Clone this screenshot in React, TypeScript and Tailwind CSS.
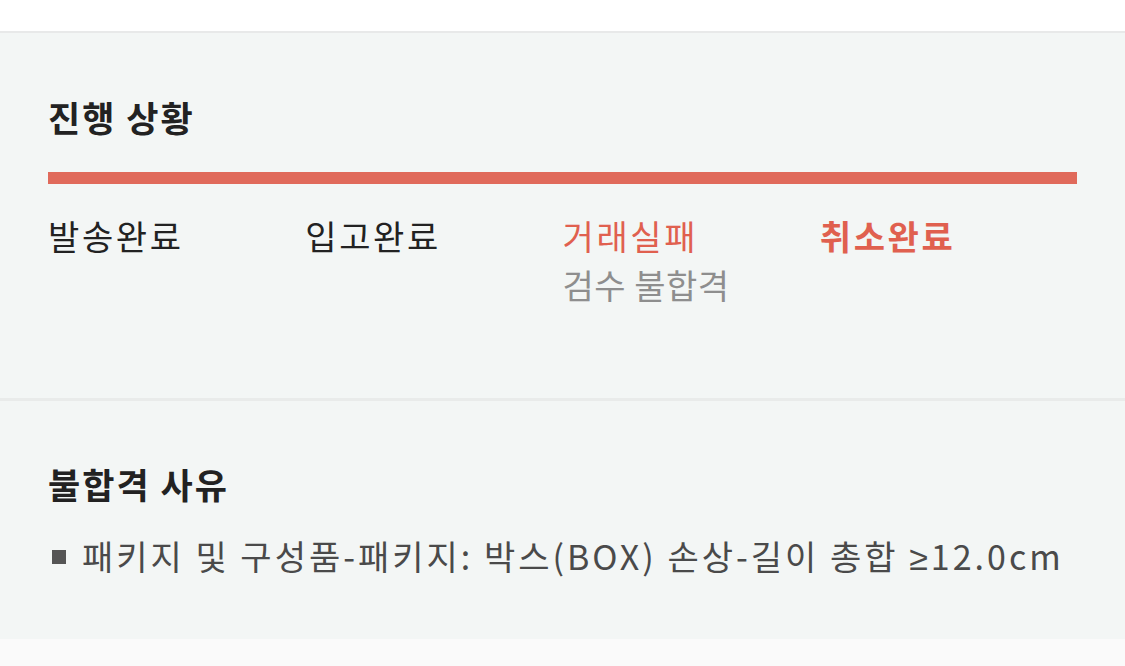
const steps = [
  { label: "발송완료", tone: "done" },
  { label: "입고완료", tone: "done" },
  { label: "거래실패", tone: "fail", sub: "검수 불합격" },
  { label: "취소완료", tone: "current" },
];

export default function App() {
  return (
    <div
      className="min-h-screen bg-[#fafafa] text-[#222]"
      style={{ fontFamily: '"Noto Sans CJK KR", "Noto Sans", sans-serif' }}
    >
      <div className="h-[31px] bg-white" />
      <div className="border-t-2 border-[#e8e9e9] bg-[#f3f6f5]">
        {/* 진행 상황 */}
        <section className="px-12 pt-[60px] pb-[88px]">
          <h2 className="text-[35px] leading-[48px] font-bold tracking-[2px]">진행 상황</h2>
          <div className="mt-[31px] h-3 bg-[#e06a5b]" />
          <div className="mt-7 grid grid-cols-4">
            {steps.map((s) => (
              <div key={s.label} className="flex flex-col">
                <span
                  className={
                    s.tone === "done"
                      ? "text-[34px] leading-[48px] tracking-[2.6px] text-[#222]"
                      : s.tone === "fail"
                        ? "text-[34px] leading-[48px] tracking-[2.6px] text-[#e0604f]"
                        : "text-[34px] leading-[48px] tracking-[2.6px] font-bold text-[#e0604f]"
                  }
                >
                  {s.label}
                </span>
                {s.sub && (
                  <span className="text-[34px] leading-[50px] tracking-[0.5px] text-[#8e8e8e]">
                    {s.sub}
                  </span>
                )}
              </div>
            ))}
          </div>
        </section>

        {/* 불합격 사유 */}
        <section className="border-t-[3px] border-[#e9ebea] px-12 pt-[59px] pb-[57px]">
          <h2 className="text-[35px] leading-[48px] font-bold tracking-[2px]">불합격 사유</h2>
          <p className="mt-6 flex items-center gap-4 text-[34px] leading-[48px] tracking-[3px] text-[#4a4a4a]">
            <span className="ml-1 inline-block h-[14px] w-[14px] shrink-0 bg-[#555]" />
            <span className="whitespace-nowrap">
              패키지 및 구성품-패키지: 박스(BOX) 손상-길이 총합{" "}
              <span style={{ fontFamily: '"Liberation Sans", sans-serif' }}>≥</span>12.0cm
            </span>
          </p>
        </section>
      </div>
    </div>
  );
}
